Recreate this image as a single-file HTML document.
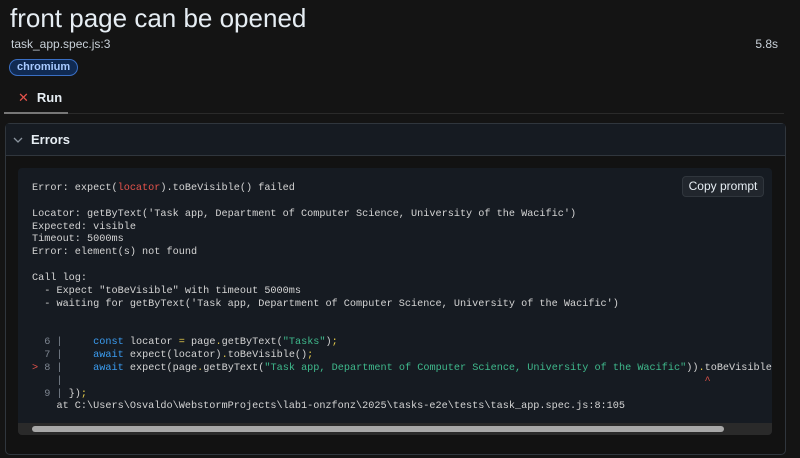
<!DOCTYPE html>
<html><head><style>
body{margin:0;width:800px;height:458px;background:#141414;color:#e6edf3;font-family:"Liberation Sans",sans-serif;overflow:hidden;position:relative}
.t{position:absolute;left:10px;top:3px;font-size:26px;color:#e6edf3}
.f{position:absolute;left:11px;top:37px;font-size:12px;color:#c9d1d9}
.d{position:absolute;right:22px;top:37px;font-size:12px;color:#c9d1d9}
.chip{position:absolute;left:9px;top:59px;height:15px;padding:0 7px;border:1px solid #3a6fc4;border-radius:9px;background:#102a52;color:#a8caff;font-size:11px;font-weight:bold;line-height:15px}
.tab{position:absolute;left:18px;top:90px;font-size:13px;color:#e6edf3;font-weight:bold}
.tab span{color:#e5534b;margin-right:8px;font-weight:normal}
.tl{position:absolute;left:4px;top:112px;width:64px;height:2px;background:#777}
.tl2{position:absolute;left:68px;top:113px;width:716px;height:1px;background:#2a2a2a}
.panel{position:absolute;left:5px;top:123px;width:779px;height:330px;border:1px solid #30363d;border-radius:5px;background:#121212}
.ph{height:31px;border-bottom:1px solid #30363d;background:#161b22;font-size:13px;font-weight:bold;line-height:32px;padding-left:25px;position:relative}
.ph svg{position:absolute;left:7px;top:13px}
.code{position:absolute;left:12px;top:44px;width:754px;height:267px;background:#161b22;border-radius:4px;overflow:hidden}
pre{margin:0;position:absolute;left:14px;top:15px;font-family:"Liberation Mono",monospace;font-size:10.2px;line-height:12.85px;color:#d4d4d4}
.r{color:#e5534b}.g{color:#3fb98c}.b{color:#3b9cf0}.y{color:#e3c94a}.n{color:#7d8590}
.btn{position:absolute;right:8px;top:8px;width:80px;height:19px;background:#21262d;border:1px solid #30363d;border-radius:4px;font-size:12px;color:#e6edf3;text-align:center;line-height:19px}
.sb{position:absolute;left:0;bottom:0;width:754px;height:12px;background:#2a2a2a}
.th{position:absolute;left:14px;top:3px;width:692px;height:6px;background:#a8a8a8;border-radius:3px}
</style></head><body>
<div class="t">front page can be opened</div>
<div class="f">task_app.spec.js:3</div>
<div class="d">5.8s</div>
<div class="chip">chromium</div>
<div class="tab"><span>✕</span>Run</div>
<div class="tl"></div><div class="tl2"></div>
<div class="panel">
<div class="ph"><svg width="10" height="6" viewBox="0 0 10 6"><path d="M1 1L5 5L9 1" stroke="#8b949e" stroke-width="1.3" fill="none"/></svg>Errors</div>
<div class="code">
<pre>Error: expect(<span class="r">locator</span>).toBeVisible() failed

Locator: getByText('Task app, Department of Computer Science, University of the Wacific')
Expected: visible
Timeout: 5000ms
Error: element(s) not found

Call log:
  - Expect "toBeVisible" with timeout 5000ms
  - waiting for getByText('Task app, Department of Computer Science, University of the Wacific')


<span class="n">  6 |</span>     <span class="b">const</span> locator <span class="y">=</span> page<span class="y">.</span>getByText(<span class="g">"Tasks"</span>)<span class="y">;</span>
<span class="n">  7 |</span>     <span class="b">await</span> expect(locator)<span class="y">.</span>toBeVisible()<span class="y">;</span>
<span class="r">&gt;</span><span class="n"> 8 |</span>     <span class="b">await</span> expect(page<span class="y">.</span>getByText(<span class="g">"Task app, Department of Computer Science, University of the Wacific"</span>))<span class="y">.</span>toBeVisible
<span class="n">    |</span>                                                                                                         <span class="r">^</span>
<span class="n">  9 |</span> })<span class="y">;</span>
    at C:\Users\Osvaldo\WebstormProjects\lab1-onzfonz\2025\tasks-e2e\tests\task_app.spec.js:8:105</pre>
<div class="btn">Copy prompt</div>
<div class="sb"><div class="th"></div></div>
</div>
</div>
</body></html>
